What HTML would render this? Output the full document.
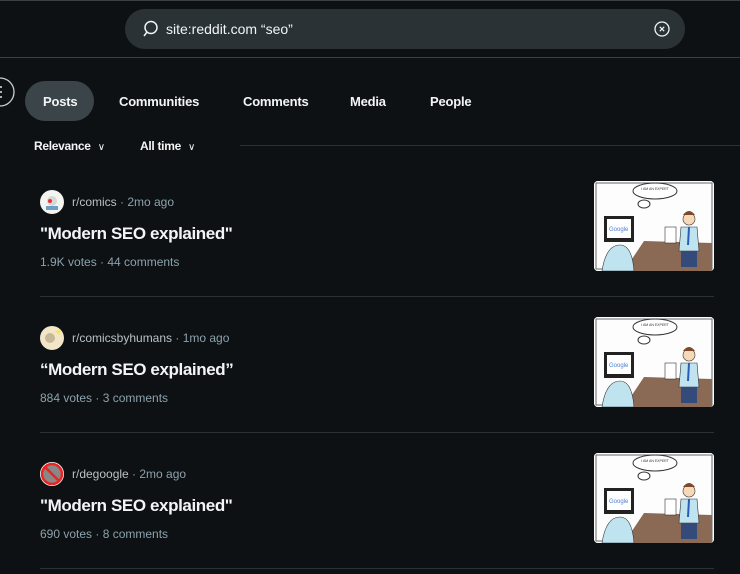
<!DOCTYPE html>
<html><head><meta charset="utf-8"><style>
*{margin:0;padding:0;box-sizing:border-box}
body{width:740px;height:574px;background:#0e1113;overflow:hidden;position:relative;font-family:"Liberation Sans",sans-serif;color:#f2f4f5}
.abs{position:absolute}
.search{left:125px;top:9px;width:560px;height:40px;border-radius:20px;background:#2a3236}
.search .t{left:41px;top:12px;font-size:14px;color:#f2f4f5}
.hr{left:0;top:57px;width:740px;height:1px;background:#3a4044}
.tab{font-size:13px;font-weight:bold;color:#f2f4f5;letter-spacing:-0.2px}
.pill{left:25px;top:81px;width:69px;height:40px;border-radius:20px;background:#3b4549}
.sort{top:139px;font-size:12px;font-weight:bold;color:#f2f4f5;letter-spacing:-0.3px}
.sub{font-size:12px;color:#b7c1c7}
.title{font-size:17px;font-weight:bold;color:#f2f4f5;letter-spacing:-0.4px}
.meta{font-size:12px;color:#8ba2ad}
.sep{left:40px;width:674px;height:1px;background:#2b3236}
.av{width:24px;height:24px;border-radius:50%}
.thumb{width:120px;height:90px;border-radius:4px;overflow:hidden;background:#fff}
</style></head><body>
<div class="abs" style="left:0;top:0;width:740px;height:1px;background:#3a4044"></div>
<div class="abs search">
<svg class="abs" style="left:17px;top:11px" width="18" height="18" viewBox="0 0 18 18"><circle cx="9" cy="7.5" r="6" fill="none" stroke="#f2f4f5" stroke-width="1.5"/><line x1="5" y1="12" x2="2" y2="16" stroke="#f2f4f5" stroke-width="1.5"/></svg>
<div class="abs t">site:reddit.com “seo”</div>
<svg class="abs" style="left:529px;top:12px" width="16" height="16" viewBox="0 0 16 16"><circle cx="8" cy="8" r="7" fill="none" stroke="#f2f4f5" stroke-width="1.3"/><path d="M5.8 5.8L10.2 10.2M10.2 5.8L5.8 10.2" stroke="#f2f4f5" stroke-width="1.2"/></svg>
</div>
<div class="abs hr"></div>
<svg class="abs" style="left:-10px;top:76px" width="26" height="32" viewBox="0 0 26 32"><circle cx="10" cy="16" r="14" fill="none" stroke="#c8ced1" stroke-width="1.3"/><path d="M2 11h10M2 16h10M2 21h10" stroke="#e0e4e6" stroke-width="1.6"/></svg>
<div class="abs pill"></div>
<div class="abs tab" style="left:43px;top:94px">Posts</div>
<div class="abs tab" style="left:119px;top:94px">Communities</div>
<div class="abs tab" style="left:243px;top:94px">Comments</div>
<div class="abs tab" style="left:350px;top:94px">Media</div>
<div class="abs tab" style="left:430px;top:94px">People</div>
<div class="abs sort" style="left:34px">Relevance <span style="font-weight:normal;font-size:10px;margin-left:4px">&#x2228;</span></div>
<div class="abs sort" style="left:140px">All time <span style="font-weight:normal;font-size:10px;margin-left:4px">&#x2228;</span></div>
<div class="abs" style="left:240px;top:145px;width:500px;height:1px;background:#2b3236"></div>

<div class="abs av" style="left:40px;top:190px;background:#f4f4f0"><svg width="24" height="24"><circle cx="12" cy="11" r="5" fill="#d8d8d8"/><circle cx="10" cy="11" r="2" fill="#e33"/><rect x="6" y="16" width="12" height="4" fill="#6aa0c8"/></svg></div>
<div class="abs sub" style="left:72px;top:195px">r/comics <span style="color:#8ba2ad">· 2mo ago</span></div>
<div class="abs title" style="left:40px;top:224px">"Modern SEO explained"</div>
<div class="abs meta" style="left:40px;top:255px">1.9K votes · 44 comments</div>
<div class="abs sep" style="top:296px"></div>

<div class="abs av" style="left:40px;top:326px;background:#f3e6c8"><svg width="24" height="24"><circle cx="10" cy="12" r="5" fill="#c8b89a"/><path d="M15 5l6 -1l-2 5z" fill="#f5e35a"/></svg></div>
<div class="abs sub" style="left:72px;top:331px">r/comicsbyhumans <span style="color:#8ba2ad">· 1mo ago</span></div>
<div class="abs title" style="left:40px;top:360px">“Modern SEO explained”</div>
<div class="abs meta" style="left:40px;top:391px">884 votes · 3 comments</div>
<div class="abs sep" style="top:432px"></div>

<div class="abs av" style="left:40px;top:462px;background:#fff"><svg width="24" height="24"><circle cx="12" cy="12" r="10" fill="#888" stroke="#e22" stroke-width="2.5"/><line x1="5" y1="5" x2="19" y2="19" stroke="#e22" stroke-width="2.5"/></svg></div>
<div class="abs sub" style="left:72px;top:467px">r/degoogle <span style="color:#8ba2ad">· 2mo ago</span></div>
<div class="abs title" style="left:40px;top:496px">"Modern SEO explained"</div>
<div class="abs meta" style="left:40px;top:527px">690 votes · 8 comments</div>
<div class="abs sep" style="top:568px"></div>

<svg width="0" height="0" style="position:absolute"><defs><g id="comic">
<rect width="120" height="90" fill="#fdfdfd"/>
<rect x="2" y="2" width="116" height="86" fill="none" stroke="#666" stroke-width="1"/>
<path d="M30 90L50 60L118 62L118 90z" fill="#8a6a55"/>
<ellipse cx="61" cy="10" rx="22" ry="8" fill="#fff" stroke="#333"/>
<text x="61" y="9" font-size="3.5" text-anchor="middle" fill="#333" font-family="Liberation Sans">I AM AN EXPERT</text>
<ellipse cx="50" cy="23" rx="6" ry="4" fill="#fff" stroke="#333"/>
<rect x="10" y="35" width="30" height="26" fill="#222"/>
<rect x="13" y="38" width="24" height="19" fill="#fff"/>
<text x="15" y="50" font-size="6" fill="#4a7fd0" font-family="Liberation Sans">Google</text>
<path d="M8 90Q12 64 26 64Q38 64 40 90z" fill="#bfe3ef" stroke="#333" stroke-width=".6"/>
<circle cx="95" cy="38" r="6" fill="#f5d9b8" stroke="#333" stroke-width=".6"/>
<path d="M89 34q6-8 12 0" fill="#7a4a2a"/>
<path d="M87 46h16l2 24h-20z" fill="#bfe3ef" stroke="#333" stroke-width=".6"/>
<path d="M95 46l-1 18" stroke="#2a5bb8" stroke-width="2"/>
<path d="M87 70h16v16h-16z" fill="#334a7a"/>
<rect x="71" y="46" width="11" height="16" fill="#fff" stroke="#333" stroke-width=".6"/>
</g></defs></svg>
<div class="abs thumb" style="left:594px;top:181px"><svg width="120" height="90"><use href="#comic"/></svg></div>
<div class="abs thumb" style="left:594px;top:317px"><svg width="120" height="90"><use href="#comic"/></svg></div>
<div class="abs thumb" style="left:594px;top:453px"><svg width="120" height="90"><use href="#comic"/></svg></div>
</body></html>
